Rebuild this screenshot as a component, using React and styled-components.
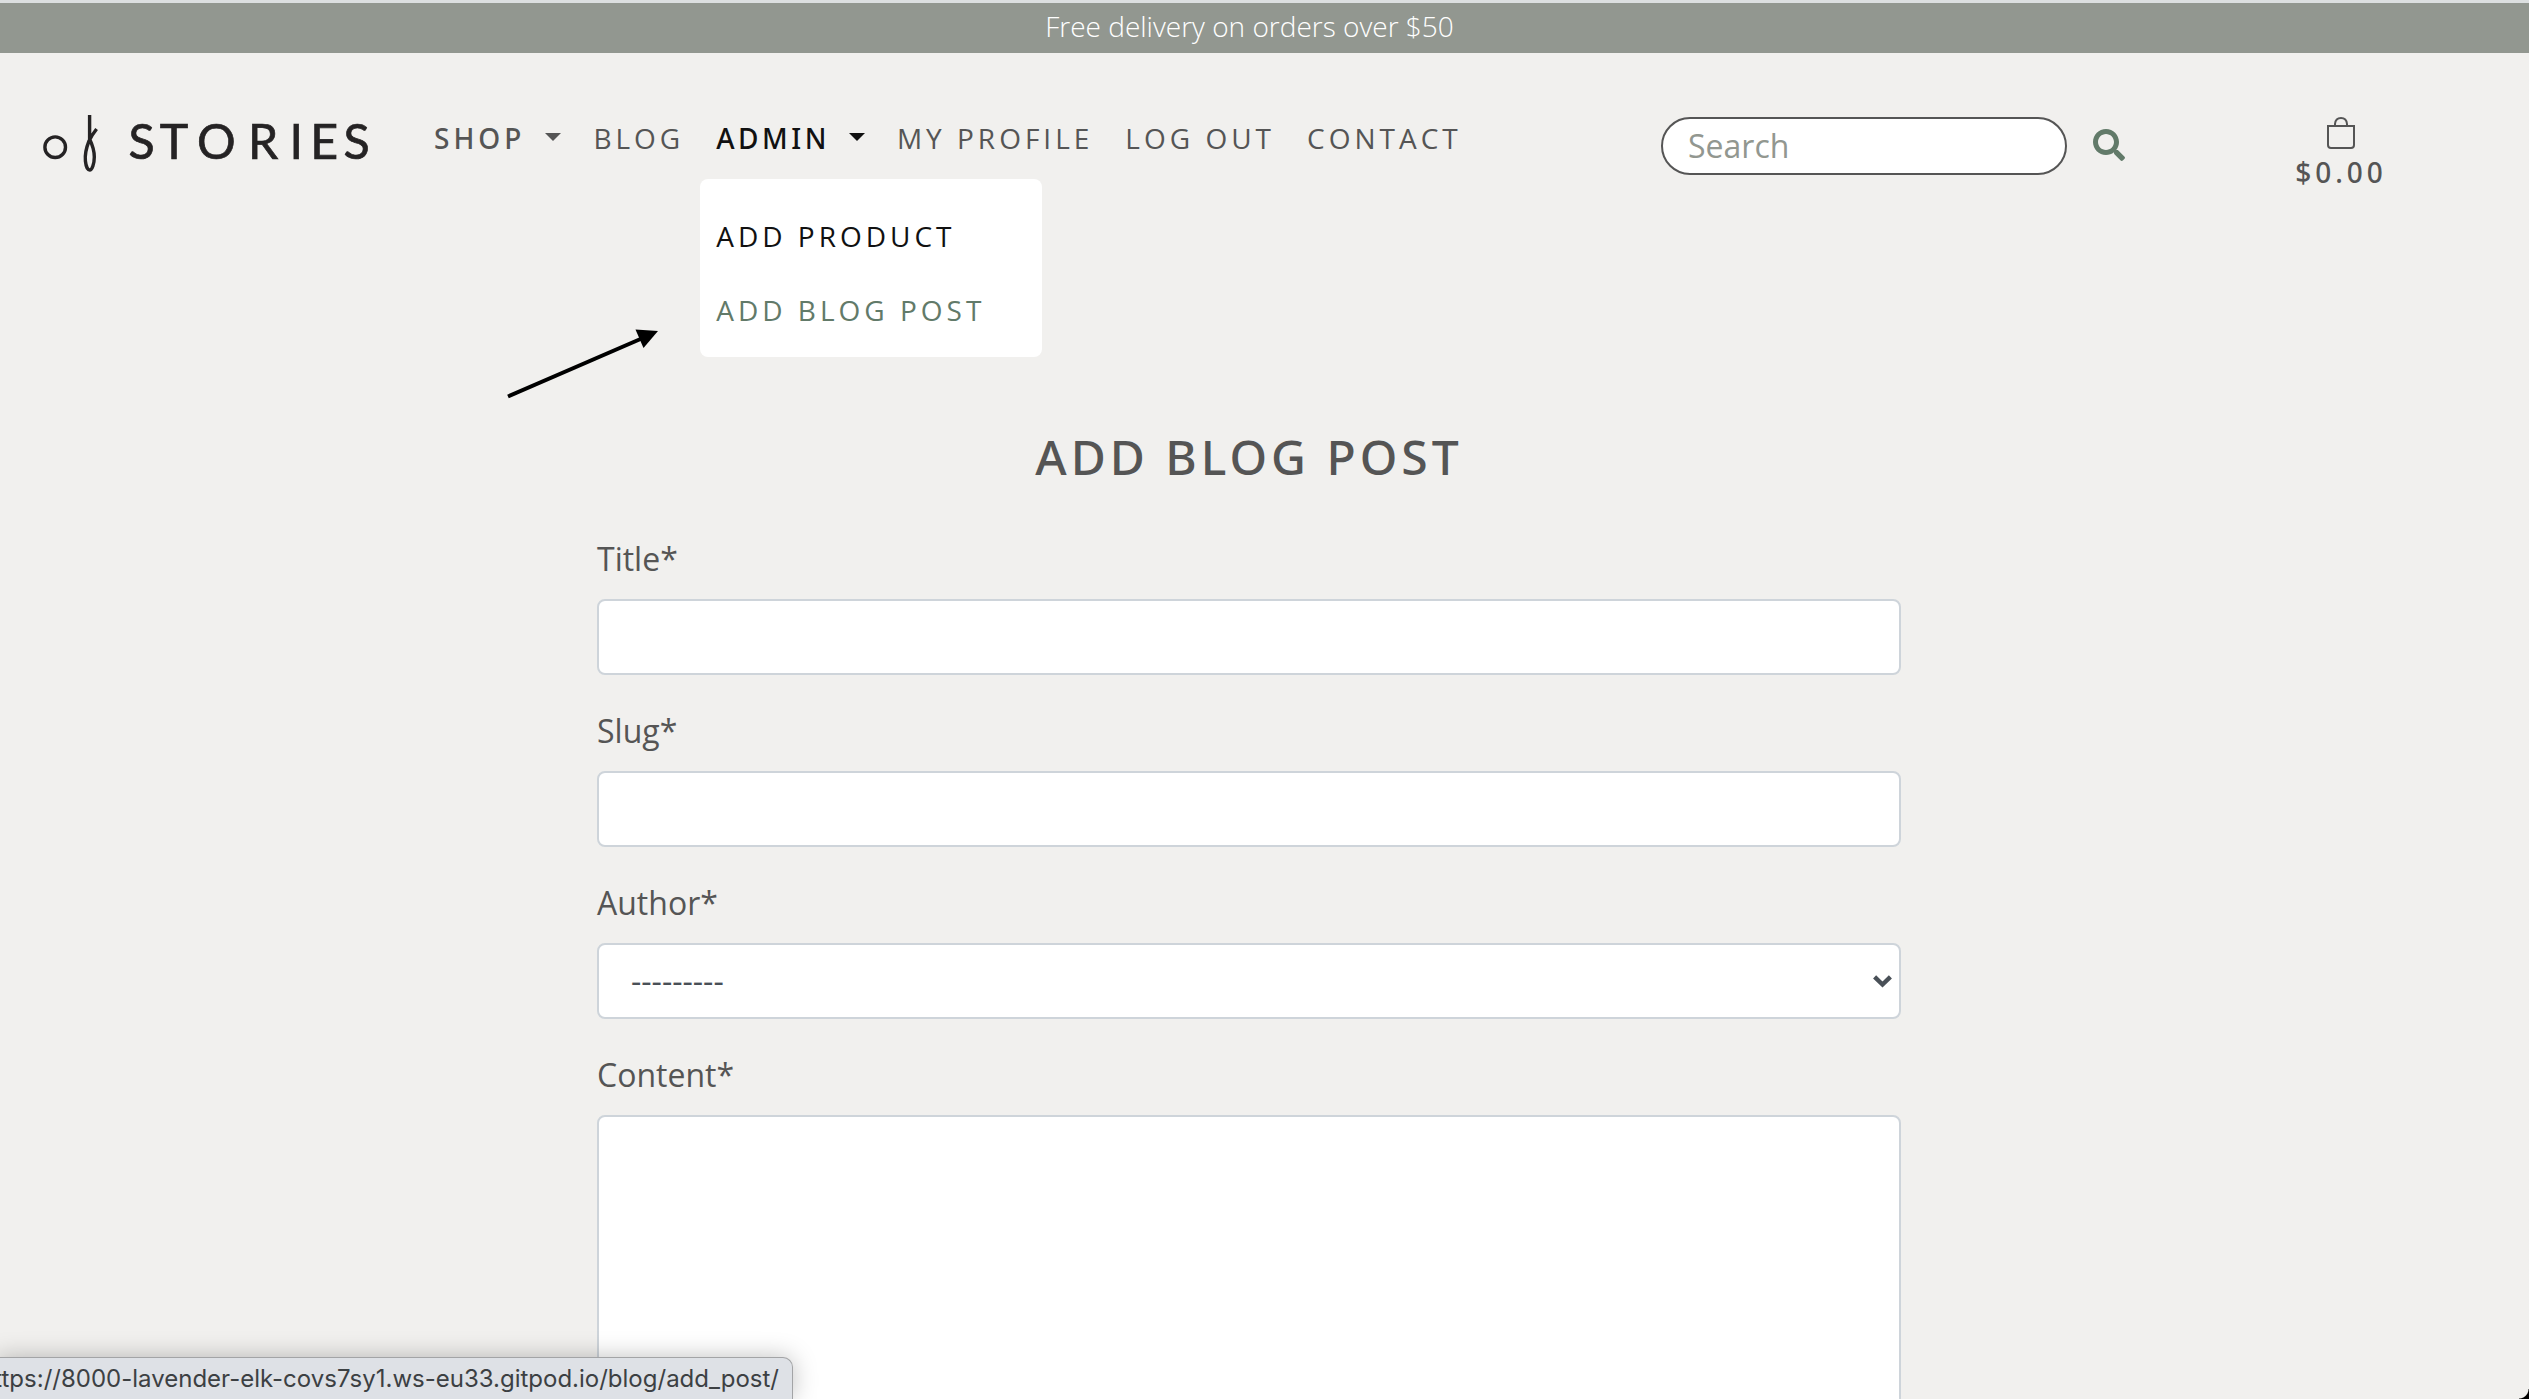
import React from "react";
import styled, { createGlobalStyle, css } from "styled-components";
import { FaSearch } from "react-icons/fa";

const GlobalStyle = createGlobalStyle`
  *, *::before, *::after { box-sizing: border-box; }
  html, body { margin: 0; height: 100%; overflow: hidden; }
  body {
    background: #f1f0ee;
    color: #555;
    font-family: "Open Sans", "Noto Sans", sans-serif;
    font-size: 32px;
  }
`;

const Page = styled.div`
  position: relative;
  height: 1399px;
  overflow: hidden;
  background: #f1f0ee;
`;

const Banner = styled.div`
  height: 53px;
  padding: 0 30px 0 0;
  border-top: 3px solid #dcdfe0;
  background: #929790;
  color: #fff;
  font-size: 28px;
  font-weight: 300;
  line-height: 46px;
  text-align: center;
`;

const Header = styled.header`
  display: flex;
  align-items: flex-start;
  height: 147px;
`;

const Brand = styled.a`
  display: block;
  width: 418px;
  padding: 47px 0 0 30px;
`;

const Logo = styled.svg`
  display: block;
  width: 350px;
  height: 90px;
  overflow: visible;
`;

const LogoText = styled.text`
  font-family: Lato, sans-serif;
  font-size: 48.3px;
  font-weight: 400;
  fill: #252324;
  stroke: #252324;
  stroke-width: 0.7;
`;

const Nav = styled.nav`
  display: flex;
  flex: 1;
  padding-top: 64px;
`;

const NavItem = styled.div`
  position: relative;
  padding: 0 16px;
`;

const linkText = css`
  font-size: 28px;
  line-height: 42px;
  letter-spacing: 4px;
  white-space: nowrap;
`;

const mediumText = css`
  font-family: "Noto Sans", sans-serif;
  font-weight: 500;
`;

const NavLink = styled.a`
  ${linkText}
  ${(p) => p.$bold && mediumText}
  display: flex;
  color: ${(p) => (p.$active ? "#111" : "#555")};
  letter-spacing: ${(p) => (p.$active ? 3.5 : 4)}px;
`;

const Caret = styled.span`
  margin: 16px 0 0 ${(p) => (p.$near ? 19 : 20)}px;
  width: 0;
  height: 0;
  border-top: 8px solid currentColor;
  border-left: 8px solid transparent;
  border-right: 8px solid transparent;
`;

const Menu = styled.div`
  position: absolute;
  top: 62px;
  left: 0;
  width: 342px;
  height: 178px;
  padding: 20px 0;
  border-radius: 8px;
  background: #fff;
`;

const MenuItem = styled.a`
  ${linkText}
  display: block;
  padding: 16px;
  color: ${(p) => (p.$hover ? "#627a69" : "#111")};
`;

const Search = styled.form`
  display: flex;
  align-items: center;
  gap: 26px;
  width: 634px;
  padding-top: 64px;
`;

const SearchInput = styled.div`
  width: 406px;
  height: 58px;
  padding: 0 25px;
  border: 2px solid #555;
  border-radius: 29px;
  background: #fff;
  color: #929790;
  line-height: 53px;
`;

const SearchIcon = styled(FaSearch)`
  width: 32px;
  height: 32px;
  margin-bottom: 2px;
  color: #627a69;
`;

const Cart = styled.a`
  display: flex;
  flex-direction: column;
  align-items: center;
  width: 234px;
  padding: 64px 142px 0 0;
`;

const BagIcon = styled.svg`
  display: block;
  width: 28px;
  height: 32px;
  fill: none;
  stroke: #555;
  stroke-width: 2;
`;

const Total = styled.span`
  ${linkText}
  ${mediumText}
  margin-top: 2px;
`;

const Main = styled.main`
  display: flex;
  flex-direction: column;
  align-items: center;
  padding: 221px 31px 0 0;
`;

const Title = styled.h1`
  ${mediumText}
  margin: 0 0 42px;
  font-size: 48px;
  line-height: 72px;
  letter-spacing: 4px;
`;

const Form = styled.form`
  display: flex;
  flex-direction: column;
  gap: 32px;
  width: 1304px;
`;

const Field = styled.label`
  display: flex;
  flex-direction: column;
  gap: 16px;
  line-height: 48px;
`;

const Control = styled.div`
  display: flex;
  align-items: center;
  justify-content: space-between;
  height: ${(p) => (p.$tall ? 420 : 76)}px;
  padding: 0 7px 0 32px;
  border: 2px solid #ced4da;
  border-radius: 8px;
  background: #fff;
  color: #495057;
`;

const Chevron = styled.svg`
  width: 19px;
  height: 13px;
  fill: none;
  stroke: #495057;
  stroke-width: 4.4;
`;

const Arrow = styled.svg`
  position: absolute;
  top: 320px;
  left: 500px;
  width: 165px;
  height: 85px;
`;

const StatusBar = styled.div`
  position: absolute;
  bottom: 0;
  left: -4px;
  display: flex;
  justify-content: flex-end;
  width: 797px;
  height: 42px;
  padding-right: 13px;
  border: 1px solid #a3a4a6;
  border-bottom: 0;
  border-radius: 0 10px 0 0;
  background: #dee1e6;
  box-shadow: 0 0 24px rgba(0, 0, 0, 0.25);
  overflow: hidden;
  color: #3c4043;
  font-family: Inter, sans-serif;
  font-size: 24px;
  line-height: 41px;
  white-space: nowrap;
`;

const Corner = styled.div`
  position: absolute;
  right: 0;
  bottom: 0;
  width: 10px;
  height: 10px;
  background: radial-gradient(circle at 0 0, transparent 9px, #000 10px);
`;

const fields = [
  { label: "Title*" },
  { label: "Slug*" },
  { label: "Author*", select: "---------" },
  { label: "Content*", tall: true },
];

export default function App() {
  return (
    <Page>
      <GlobalStyle />
      <Banner>Free delivery on orders over $50</Banner>
      <Header>
        <Brand>
          <Logo viewBox="30 100 350 90">
            <g fill="none" stroke="#252324" strokeWidth="3.4">
              <circle cx="55.2" cy="147.2" r="10.3" />
              <path
                strokeLinejoin="round"
                d="M96.6 129 Q91.5 135.5 89 141 C85.8 149 84.8 155 85.4 161 C86 167 88 170 89.7 170 C92 170 94.3 164 94.3 157 C94.3 150 92 144 89.6 139 V115"
              />
            </g>
            <LogoText y="158.7" x="128.6 159.800 197 248 289.500 310.200 343.500">STORIES</LogoText>
          </Logo>
        </Brand>
        <Nav>
          <NavItem>
            <NavLink $bold>SHOP<Caret /></NavLink>
          </NavItem>
          <NavItem>
            <NavLink>BLOG</NavLink>
          </NavItem>
          <NavItem>
            <NavLink $bold $active>ADMIN<Caret $near /></NavLink>
            <Menu>
              <MenuItem>ADD PRODUCT</MenuItem>
              <MenuItem $hover>ADD BLOG POST</MenuItem>
            </Menu>
          </NavItem>
          <NavItem>
            <NavLink>MY PROFILE</NavLink>
          </NavItem>
          <NavItem>
            <NavLink>LOG OUT</NavLink>
          </NavItem>
          <NavItem>
            <NavLink>CONTACT</NavLink>
          </NavItem>
        </Nav>
        <Search>
          <SearchInput>Search</SearchInput>
          <SearchIcon />
        </Search>
        <Cart>
          <BagIcon viewBox="0 0 28 32">
            <path d="M1 9 H27 V28 Q27 31 24 31 H4 Q1 31 1 28 Z M8 9 V7 Q8.500 1 14 1 Q19.500 1 20 7 V9" />
          </BagIcon>
          <Total>$0.00</Total>
        </Cart>
      </Header>
      <Main>
        <Title>ADD BLOG POST</Title>
        <Form>
          {fields.map((f) => (
            <Field key={f.label}>
              {f.label}
              <Control $tall={f.tall}>
                {f.select}
                {f.select && (
                  <Chevron viewBox="0 0 19 13">
                    <path d="M1.600 1.900 L9.500 9.500 L17.400 1.900" />
                  </Chevron>
                )}
              </Control>
            </Field>
          ))}
        </Form>
      </Main>
      <Arrow viewBox="500 320 165 85">
        <path d="M508 396.500 L644 337.500" stroke="#000" strokeWidth="4" />
        <path d="M635.500 329.500 L658 331 L643.500 348 Z" />
      </Arrow>
      <StatusBar>https://8000-lavender-elk-covs7sy1.ws-eu33.gitpod.io/blog/add_post/</StatusBar>
      <Corner />
    </Page>
  );
}
